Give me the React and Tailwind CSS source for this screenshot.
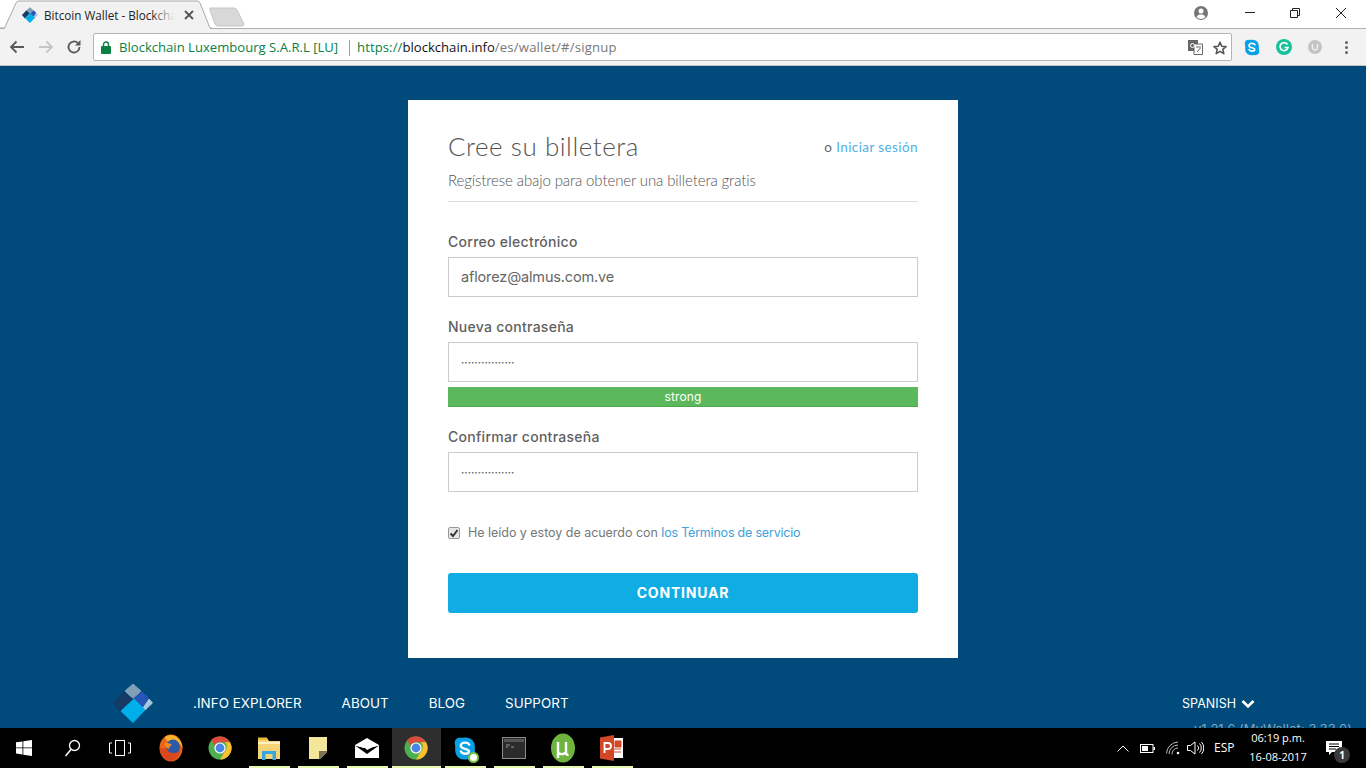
import React from "react";

const Logo = ({ size = 40 }) => (
  <svg width={size} height={size} viewBox="0 0 40 40" strokeLinejoin="round">
    <polygon points="20,1 28,8 20,15.5 12,8" fill="#7fa0b8" stroke="#7fa0b8" />
    <polygon points="11,9 19.5,16 7,28 0.5,20" fill="#173a66" stroke="#173a66" />
    <polygon points="29,9 35,14.5 29,25 21,15.5" fill="#2a55b8" stroke="#2a55b8" />
    <polygon points="36,16 39.5,20 32,27 30,25" fill="#a9c7dd" stroke="#a9c7dd" />
    <polygon points="21,16 32,27 20,39.5 8,28" fill="#00aeea" stroke="#00aeea" />
  </svg>
);

const ChromeIcon = ({ size = 24 }) => (
  <svg width={size} height={size} viewBox="0 0 24 24">
    <circle cx="12" cy="12" r="11.5" fill="#4caf50" />
    <path d="M12 .5a11.5 11.5 0 0 1 10 5.75H12a5.75 5.75 0 0 0-5.4 3.6L3 4.2A11.5 11.5 0 0 1 12 .5Z" fill="#dd4b3e" />
    <path d="M22 6.25A11.5 11.5 0 0 1 12 23.5l5-8.6a5.75 5.75 0 0 0-.2-8.65Z" fill="#fbc02d" />
    <circle cx="12" cy="12" r="5.6" fill="#fff" />
    <circle cx="12" cy="12" r="4.4" fill="#4a86e8" />
  </svg>
);

const FirefoxIcon = () => (
  <svg width="24" height="28" viewBox="0 0 24 28">
    <ellipse cx="12" cy="14" rx="11.5" ry="13.5" fill="#e8641b" />
    <path d="M6 3c3-2.5 9-3 13 1 3 3 4.500 7 4.500 10-2-4-5-6-8-6.500C11 7 7 9 6 3Z" fill="#f7b32b" />
    <ellipse cx="14" cy="13" rx="7" ry="7.500" fill="#2b5aa8" />
    <path d="M1 13c2 3 5 2 6 0 1 4 4 6 8 6 3 0 6-2 7-5-1 8-6 13-10 13C6 27 .500 21 1 13Z" fill="#d9481c" />
    <path d="M6 8c2 1 5 1 7 3-2 1-3 2-3 4-3-1-5-4-4-7Z" fill="#f28a1e" />
  </svg>
);

const SkypeIcon = ({ w = 18, h = 20 }) => (
  <svg width={w} height={h} viewBox="0 0 18 20">
    <rect x="1" y="1" width="16" height="18" rx="7" fill="#08a1e6" />
    <circle cx="5" cy="5.500" r="4.500" fill="#08a1e6" />
    <circle cx="13" cy="14.500" r="4.500" fill="#08a1e6" />
    <path d="M12.500 6.800C11.800 5.700 10.500 5.200 9 5.200c-2 0-3.500 1-3.500 2.600 0 3.300 6.700 1.800 6.700 4.600 0 1.100-1.300 1.900-3.100 1.900-1.500 0-2.800-.7-3.500-1.900" fill="none" stroke="#fff" strokeWidth="1.900" strokeLinecap="round" />
  </svg>
);

const taskSlots = [
  { key: "firefox", icon: <FirefoxIcon /> },
  { key: "chrome", icon: <ChromeIcon /> },
  {
    key: "explorer",
    icon: (
      <svg width="24" height="24" viewBox="0 0 24 24">
        <path d="M1 2h9l2 3h11v18H1Z" fill="#f5d477" />
        <rect x="1" y="1.500" width="9" height="2.500" fill="#e8b93f" />
        <rect x="1" y="6" width="22" height="2" fill="#fdf1c2" />
        <rect x="5" y="15" width="14" height="3" fill="#35a7e0" />
        <rect x="5" y="15" width="3.500" height="9" fill="#35a7e0" />
        <rect x="15.500" y="15" width="3.500" height="9" fill="#35a7e0" />
      </svg>
    ),
  },
  {
    key: "sticky",
    icon: (
      <svg width="20" height="24" viewBox="0 0 20 24">
        <path d="M1 1h18v15l-7 7H1Z" fill="#f4e79c" />
        <path d="M19 15H11v8h1.500L19 16.500Z" fill="#7c7350" />
      </svg>
    ),
  },
  {
    key: "mail",
    icon: (
      <svg width="26" height="22" viewBox="0 0 26 22">
        <path d="M1 8 13 1l12 7v13H1Z" fill="#fff" />
        <path d="M1 8.500 13 17 25 8.500 20 10 10 11Z" fill="#000" />
        <path d="M3 9 13 4l8 5-8 4-2-2Z" fill="#fff" />
      </svg>
    ),
  },
  { key: "chrome2", icon: <ChromeIcon />, active: true },
  {
    key: "skype",
    icon: (
      <div className="relative">
        <SkypeIcon w={22} h={25} />
        <span className="absolute -right-[3px] -bottom-[2px] h-[11px] w-[11px] rounded-full border-2 border-[#7cc242] bg-white" />
      </div>
    ),
  },
  {
    key: "cmd",
    icon: (
      <svg width="24" height="22" viewBox="0 0 24 22">
        <rect x=".5" y=".5" width="23" height="21" fill="#2b2b2b" stroke="#8a8a8a" />
        <rect x="2" y="2" width="20" height="3" fill="#555" />
        <path d="M4 8h4M4 10h2M9 10h3" stroke="#999" strokeWidth="1" />
      </svg>
    ),
  },
  {
    key: "utorrent",
    icon: (
      <svg width="24" height="30" viewBox="0 0 24 30">
        <ellipse cx="12" cy="15" rx="12" ry="14.500" fill="#6fb43f" />
        <path d="M7 9v9c0 4 6 4 8 1M15 9v11c0 1.500 1 2 2.500 1.500M7 17v8" fill="none" stroke="#fff" strokeWidth="2.400" />
      </svg>
    ),
  },
  {
    key: "ppt",
    icon: (
      <svg width="24" height="26" viewBox="0 0 24 26">
        <rect x="9" y="3" width="14" height="20" fill="#fff" />
        <path d="M15 6h6v6h-6ZM14 14h7M14 17h7" fill="#d24726" stroke="#d24726" />
        <path d="M0 2.500 14 0v26L0 23.500Z" fill="#d24726" />
        <path d="M4.500 18V8h3.500a2.800 2.800 0 0 1 0 6H4.500" fill="none" stroke="#fff" strokeWidth="1.800" />
      </svg>
    ),
  },
];

const Label = ({ children, className = "" }) => (
  <div className={`h-5 text-[14px] leading-5 font-medium tracking-[0.27px] text-[#5f5f5f] ${className}`}>{children}</div>
);

const Field = ({ value, dots }) => (
  <input
    readOnly
    value={value}
    className={`mt-[5px] block h-10 w-full border border-[#cccccc] bg-white px-3 text-[#666] outline-none ${
      dots ? "font-bold text-[10px]" : "pb-[2px] text-[14.500px] tracking-[-0.15px]"
    }`}
  />
);

export default function App() {
  return (
    <div className="flex h-screen flex-col overflow-hidden bg-[#004a7c] font-['Inter',sans-serif]">
      {/* browser chrome */}
      <header className="shrink-0 font-['Open_Sans',sans-serif]">
        <div className="relative flex h-[29px] items-start border-b border-[#b0b0b0] bg-white">
          <div className="absolute left-0 top-0 z-10 h-[29px] w-[212px]">
            <svg width="212" height="29" viewBox="0 0 212 29" className="absolute inset-0">
              <path d="M4.500 29 16 3q1-2 3-2h178q2 0 3 2l10 25.500V29Z" fill="#f2f2f2" />
              <path d="M0 28h4.500L16 3q1-2 3-2h178q2 0 3 2l10 25h2" fill="none" stroke="#a8a8a8" />
            </svg>
            <div className="absolute left-[22px] top-[7px]">
              <Logo size={16} />
            </div>
            <div className="absolute left-[44px] top-[5px] w-[131px] overflow-hidden whitespace-nowrap text-[11.700px] leading-5 text-[#222]">
              Bitcoin Wallet - Blockchain
              <span className="absolute right-0 top-0 h-5 w-6 bg-gradient-to-r from-transparent to-[#f2f2f2]" />
            </div>
            <svg width="10" height="10" viewBox="0 0 10 10" className="absolute left-[184px] top-[10px]">
              <path d="M1 1l8 8M9 1l-8 8" stroke="#555" strokeWidth="1.800" />
            </svg>
          </div>
          <svg width="36" height="20" viewBox="0 0 36 20" className="ml-[209px] mt-[7px] shrink-0">
            <path d="M1 1h24q2 0 3 2l7 14q0 2-2 2H9q-2 0-3-2L1 3Z" fill="#d8d8d8" stroke="#c4c4c4" />
          </svg>
          <div className="ml-auto flex items-start">
            <svg width="16" height="16" viewBox="0 0 16 16" className="mr-[36px] mt-[5px]">
              <circle cx="8" cy="8" r="7" fill="#757575" />
              <circle cx="8" cy="6" r="2.500" fill="#fff" />
              <path d="M3.500 12c1-2 2.500-2.500 4.500-2.500s3.500.5 4.500 2.500a6 6 0 0 1-9 0Z" fill="#fff" />
            </svg>
            <svg width="10" height="2" viewBox="0 0 10 2" className="mr-[35px] mt-[12px]">
              <rect width="10" height="1" fill="#222" />
            </svg>
            <svg width="10" height="10" viewBox="0 0 10 10" className="mr-[36px] mt-[8px]">
              <path d="M.5 2.500h7v7h-7ZM2.500 2.500v-2h7v7h-2" fill="none" stroke="#222" />
            </svg>
            <svg width="10" height="10" viewBox="0 0 10 10" className="mr-[20px] mt-[8px]">
              <path d="M0 0l10 10M10 0 0 10" stroke="#222" strokeWidth="1" />
            </svg>
          </div>
        </div>
        <div className="flex h-[37px] items-start border-b border-[#c4c4c4] bg-[#f2f2f2]">
          <div className="flex h-[33px] w-[93px] shrink-0 items-center pl-[9px] pt-[3px]">
            <svg width="16" height="14" viewBox="0 0 16 14">
              <path d="M15 7H2M7.500 1.500 2 7l5.500 5.500" fill="none" stroke="#5a5a5a" strokeWidth="1.800" />
            </svg>
            <svg width="16" height="14" viewBox="0 0 16 14" className="ml-[13px]">
              <path d="M1 7h13M8.500 1.500 14 7l-5.500 5.500" fill="none" stroke="#c6c6c6" strokeWidth="1.800" />
            </svg>
            <svg width="16" height="16" viewBox="0 0 16 16" className="ml-[12px]">
              <path d="M13.500 8A5.500 5.500 0 1 1 11.800 4" fill="none" stroke="#5a5a5a" strokeWidth="1.800" />
              <path d="M14.500 1v5.500H9Z" fill="#5a5a5a" />
            </svg>
          </div>
          <div className="mt-1 flex h-7 w-[1139px] shrink-0 items-center rounded-[2px] border border-[#b5b5b5] bg-white pt-[1px] text-[13.100px] whitespace-nowrap">
            <svg width="10" height="13" viewBox="0 0 10 13" className="ml-[7px] shrink-0">
              <rect y="5" width="10" height="8" rx="1" fill="#0b8043" />
              <path d="M2.500 5.500V3.500a2.500 2.500 0 0 1 5 0v2" fill="none" stroke="#0b8043" strokeWidth="1.400" />
            </svg>
            <span className="ml-[8px] w-[220px] shrink-0 text-[#0b8043]">Blockchain Luxembourg S.A.R.L [LU]</span>
            <span className="ml-[10px] h-[16px] w-px shrink-0 bg-[#9e9e9e]" />
            <span className="ml-[7px] text-[#0b8043] tracking-[0.1px]">https://</span>
            <span className="text-[#111]">blockchain.info</span>
            <span className="tracking-[0.2px] text-[#777]">/es/wallet/#/signup</span>
            <div className="ml-auto flex items-center">
              <svg width="15" height="15" viewBox="0 0 15 15" className="mr-[10px]">
                <rect width="10" height="11" fill="#666" />
                <path d="M6 4h8.500v10.500H6Z" fill="#fff" stroke="#666" />
                <circle cx="4.500" cy="5.500" r="2" fill="none" stroke="#fff" />
                <path d="M8 7h5M9 12l3.500-4" stroke="#666" />
              </svg>
              <svg width="14" height="14" viewBox="0 0 14 14" className="mr-[4px]">
                <path d="M7 1.300 8.700 5.200l4.300.4-3.200 2.800 1 4.200L7 10.400l-3.800 2.200 1-4.200L1 5.600l4.300-.4Z" fill="none" stroke="#555" strokeWidth="1.600" strokeLinejoin="round" />
              </svg>
            </div>
          </div>
          <div className="flex h-[33px] flex-1 items-center pl-[12px] pt-[3px]">
            <SkypeIcon w={16} h={17} />
            <span className="ml-[16px] flex h-4 w-4 items-center justify-center rounded-full bg-[#15c39a]">
              <svg width="10" height="10" viewBox="0 0 10 10">
                <path d="M8.500 2.500A4 4 0 1 0 9 5.500H5.500" fill="none" stroke="#fff" strokeWidth="1.600" />
              </svg>
            </span>
            <span className="ml-[16px] flex h-[14px] w-[14px] items-center justify-center rounded-full bg-[#c4c4c4]">
              <svg width="8" height="8" viewBox="0 0 8 8">
                <path d="M1.500 1v3.500a2.500 2.500 0 0 0 5 0V1" fill="none" stroke="#eee" strokeWidth="1.400" />
              </svg>
            </span>
            <span className="ml-[23px] flex flex-col gap-[2px]">
              <span className="h-[3px] w-[3px] rounded-full bg-[#666]" />
              <span className="h-[3px] w-[3px] rounded-full bg-[#666]" />
              <span className="h-[3px] w-[3px] rounded-full bg-[#666]" />
            </span>
          </div>
        </div>
      </header>

      {/* page */}
      <main className="min-h-0 flex-1 overflow-hidden">
        <section className="mx-auto mt-[34px] h-[558px] w-[550px] bg-white px-10 pt-[30px]">
          <div className="flex h-8 items-center justify-between">
            <h1 className="font-['Lato',sans-serif] text-[26px] font-light tracking-[0.55px] text-[#555]">Cree su billetera</h1>
            <p className="pt-[2px] font-['Lato',sans-serif] text-[13.500px] tracking-[0.4px] text-[#666]">
              o <span className="text-[#4fb0e6]">Iniciar sesión</span>
            </p>
          </div>
          <p className="mt-2 h-5 font-['Lato',sans-serif] text-[15px] leading-5 font-light tracking-[-0.11px] text-[#555]">
            Regístrese abajo para obtener una billetera gratis
          </p>
          <div className="mt-[11px] h-px bg-[#dddddd]" />
          <Label className="mt-[30px]">Correo electrónico</Label>
          <Field value="aflorez@almus.com.ve" />
          <Label className="mt-5">Nueva contraseña</Label>
          <Field dots value="················" />
          <div className="mt-[5px] h-5 border-b border-[#4ca64c] bg-[#5cb85c] text-center text-[12px] leading-5 tracking-[0.15px] text-white">strong</div>
          <Label className="mt-5">Confirmar contraseña</Label>
          <Field dots value="················" />
          <div className="mt-[31px] flex h-5 items-center text-[12.500px] tracking-[-0.03px] text-[#777]">
            <span className="mr-2 flex h-3 w-3 items-center justify-center rounded-[2px] border border-[#9a9a9a] bg-[#e6e6e6]">
              <svg width="10" height="10" viewBox="0 0 10 10">
                <path d="M1.500 5.500 4 8l4.500-6" fill="none" stroke="#333" strokeWidth="1.900" />
              </svg>
            </span>
            He leído y estoy de acuerdo con&nbsp;<span className="tracking-[-0.2px] text-[#41a0d8]">los Términos de servicio</span>
          </div>
          <button className="mt-[30px] block h-10 w-full rounded-[3px] bg-[#10ade4] pb-[1px] text-[14px] font-bold tracking-[0.8px] text-white">CONTINUAR</button>
        </section>
      </main>

      {/* site footer */}
      <footer className="flex h-[70px] shrink-0 items-start justify-between overflow-hidden pl-[113px] pr-[14px] pt-[25px] text-[13.400px] tracking-[0.05px] text-white">
        <div className="flex items-start">
          <div className="mr-10">
            <Logo />
          </div>
          <nav className="flex gap-10 pt-[10px] leading-[20px]">
            <a>.INFO EXPLORER</a>
            <a>ABOUT</a>
            <a>BLOG</a>
            <a>SUPPORT</a>
          </nav>
        </div>
        <div className="flex w-[170px] flex-col pt-[11px]">
          <div className="flex h-5 items-center text-[12.500px]">
            SPANISH
            <svg width="14" height="10" viewBox="0 0 14 10" className="ml-[5px]">
              <path d="M1.500 2 7 7.500 12.500 2" fill="none" stroke="#fff" strokeWidth="2.600" />
            </svg>
          </div>
          <div className="mt-[6px] text-right text-[13px] whitespace-nowrap text-[#7fa5bf]">v1.21.6 (MyWallet: 3.33.0)</div>
        </div>
      </footer>

      {/* windows taskbar */}
      <div className="flex h-10 shrink-0 items-stretch bg-black font-['Open_Sans',sans-serif] text-white">
        <div className="flex w-12 items-center justify-center">
          <svg width="16" height="16" viewBox="0 0 16 16" fill="#fff">
            <path d="M0 2.300 6.500 1.400V7.500H0ZM7.300 1.300 16 0V7.500H7.300ZM0 8.300H6.500V14.500L0 13.600ZM7.300 8.300H16V16L7.300 14.700Z" />
          </svg>
        </div>
        <div className="flex w-12 items-center justify-center">
          <svg width="17" height="18" viewBox="0 0 17 18">
            <circle cx="10.500" cy="6.500" r="5" fill="none" stroke="#fff" strokeWidth="1.300" />
            <path d="M7 10.500 1.500 17" stroke="#fff" strokeWidth="1.500" />
          </svg>
        </div>
        <div className="flex w-12 items-center justify-center">
          <svg width="22" height="16" viewBox="0 0 22 16" fill="none" stroke="#fff">
            <rect x="6.500" y=".5" width="9" height="15" />
            <path d="M3 3H.5v10H3M19 3h2.500v10H19" />
          </svg>
        </div>
        <div className="flex pl-[2.500px]">
          {taskSlots.map((s) => (
            <div key={s.key} className={`relative flex w-[49px] items-center justify-center ${s.active ? "bg-[#2e2e2e]" : ""}`}>
              {s.icon}
              {s.key !== "firefox" && s.key !== "chrome" && (
                <span className={`absolute bottom-0 h-[2px] bg-[#e6f7b0] ${s.active ? "inset-x-0" : "inset-x-[4px]"}`} />
              )}
            </div>
          ))}
        </div>
        <div className="ml-auto flex items-center text-[12px]">
          <svg width="12" height="7" viewBox="0 0 12 7" className="mr-[11px]">
            <path d="M.5 6.500 6 1l5.500 5.500" fill="none" stroke="#fff" />
          </svg>
          <svg width="15" height="9" viewBox="0 0 15 9" className="mr-[11px]">
            <rect x=".5" y=".5" width="12.500" height="8" fill="none" stroke="#fff" />
            <rect x="2" y="2" width="6" height="5" fill="#fff" />
            <rect x="13.500" y="3" width="1.500" height="3" fill="#fff" />
          </svg>
          <svg width="14" height="14" viewBox="0 0 14 14" className="mr-[7px]" fill="none" stroke="#bbb">
            <path d="M.5 12.500A12 12 0 0 1 12 1M3 13A9 9 0 0 1 12 4M6 13.500A6 6 0 0 1 12 7" />
            <circle cx="12" cy="12" r="1.300" fill="#fff" stroke="none" />
          </svg>
          <svg width="17" height="14" viewBox="0 0 17 14" className="mr-[10px]" fill="none" stroke="#fff">
            <path d="M.5 4.500h3L8 1v12L3.500 9.500h-3Z" />
            <path d="M10.500 4.500a3.500 3.500 0 0 1 0 5M12.500 2.500a6.500 6.500 0 0 1 0 9M14.500 1a9 9 0 0 1 0 12" />
          </svg>
          <span className="mr-[14px] w-[20px]">ESP</span>
          <div className="mr-[18px] w-[60px] pb-[2px] text-center text-[11px] leading-[19px]">
            <div>06:19 p.m.</div>
            <div>16-08-2017</div>
          </div>
          <div className="relative mr-[24px] h-[14px] w-[16px]">
            <svg width="16" height="14" viewBox="0 0 16 14" className="absolute left-0 top-0">
              <path d="M0 0h16v11H6l-3 3v-3H0Z" fill="#fff" />
              <path d="M3 3h10M3 5.500h10M3 8h7" stroke="#000" />
            </svg>
            <span className="absolute -bottom-[8px] -right-[8px] flex h-4 w-4 items-center justify-center rounded-full bg-[#3a3a3a] text-[10px] font-bold leading-none">1</span>
          </div>
        </div>
      </div>
    </div>
  );
}
